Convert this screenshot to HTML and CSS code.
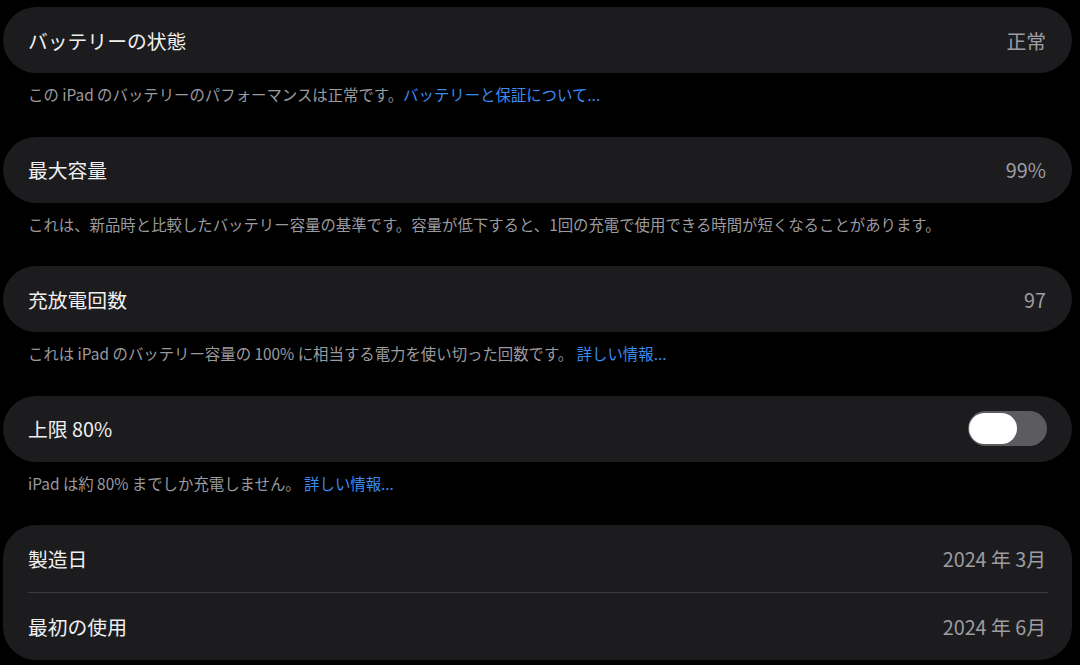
FILE: index.html
```html
<!DOCTYPE html>
<html lang="ja">
<head>
    <meta charset="UTF-8">
    <meta name="viewport" content="width=device-width, initial-scale=1.0">
    <title>バッテリー</title>
    <link rel="stylesheet" href="styles.css">
</head>
<body>
    <div class="settings">
        <section class="group">
            <div class="card">
                <div class="row">
                    <span class="label">バッテリーの状態</span>
                    <span class="value">正常</span>
                </div>
            </div>
            <p class="note">この iPad のバッテリーのパフォーマンスは正常です。<a href="#">バッテリーと保証について...</a></p>
        </section>

        <section class="group">
            <div class="card">
                <div class="row">
                    <span class="label">最大容量</span>
                    <span class="value">99%</span>
                </div>
            </div>
            <p class="note">これは、新品時と比較したバッテリー容量の基準です。容量が低下すると、1回の充電で使用できる時間が短くなることがあります。</p>
        </section>

        <section class="group">
            <div class="card">
                <div class="row">
                    <span class="label">充放電回数</span>
                    <span class="value">97</span>
                </div>
            </div>
            <p class="note">これは iPad のバッテリー容量の 100% に相当する電力を使い切った回数です。 <a href="#">詳しい情報...</a></p>
        </section>

        <section class="group">
            <div class="card">
                <div class="row">
                    <span class="label">上限 80%</span>
                    <label class="switch">
                        <input type="checkbox">
                        <span class="knob"></span>
                    </label>
                </div>
            </div>
            <p class="note">iPad は約 80% までしか充電しません。 <a href="#">詳しい情報...</a></p>
        </section>

        <section class="group">
            <div class="card">
                <div class="row tall">
                    <span class="label">製造日</span>
                    <span class="value">2024 年 3月</span>
                </div>
                <div class="row tall">
                    <span class="label">最初の使用</span>
                    <span class="value">2024 年 6月</span>
                </div>
            </div>
        </section>
    </div>
</body>
</html>
```

FILE: styles.css
```css
body {
    margin: 0;
    padding: 0;
    background: #000;
    color: #fff;
    font-family: "Noto Sans CJK JP", "Noto Sans", sans-serif;
    overflow: hidden;
}

.settings {
    padding: 7px 8px 0 3px;
}

.card {
    background: #1c1c1e;
    border-radius: 33px;
    overflow: hidden;
}

.row {
    height: 66px;
    display: flex;
    align-items: center;
    justify-content: space-between;
    padding: 0 26px 0 25px;
    position: relative;
}

.row.tall {
    height: 67px;
}

.row + .row {
    height: 68px;
}

.row + .row::before {
    content: "";
    position: absolute;
    top: 0;
    left: 25px;
    right: 24px;
    height: 1px;
    background: #3a3a3c;
}

.label {
    font-size: 19.8px;
    color: #f0f0f0;
}

.value {
    font-size: 19.8px;
    color: #9d9da2;
}

.note {
    margin: 0;
    padding: 11px 25px 32.5px;
    font-size: 15.4px;
    line-height: 20px;
    color: #9a9a9f;
    white-space: nowrap;
}

.note a {
    color: #3a8cf2;
    text-decoration: none;
}

.switch {
    position: relative;
    width: 79px;
    height: 35px;
    margin-right: -1px;
}

.switch input {
    display: none;
}

.switch .knob {
    position: absolute;
    inset: 0;
    background: #5b5b60;
    border-radius: 18px;
}

.switch .knob::after {
    content: "";
    position: absolute;
    top: 2px;
    left: 1px;
    width: 48px;
    height: 31px;
    border-radius: 16px;
    background: #fff;
}
```
